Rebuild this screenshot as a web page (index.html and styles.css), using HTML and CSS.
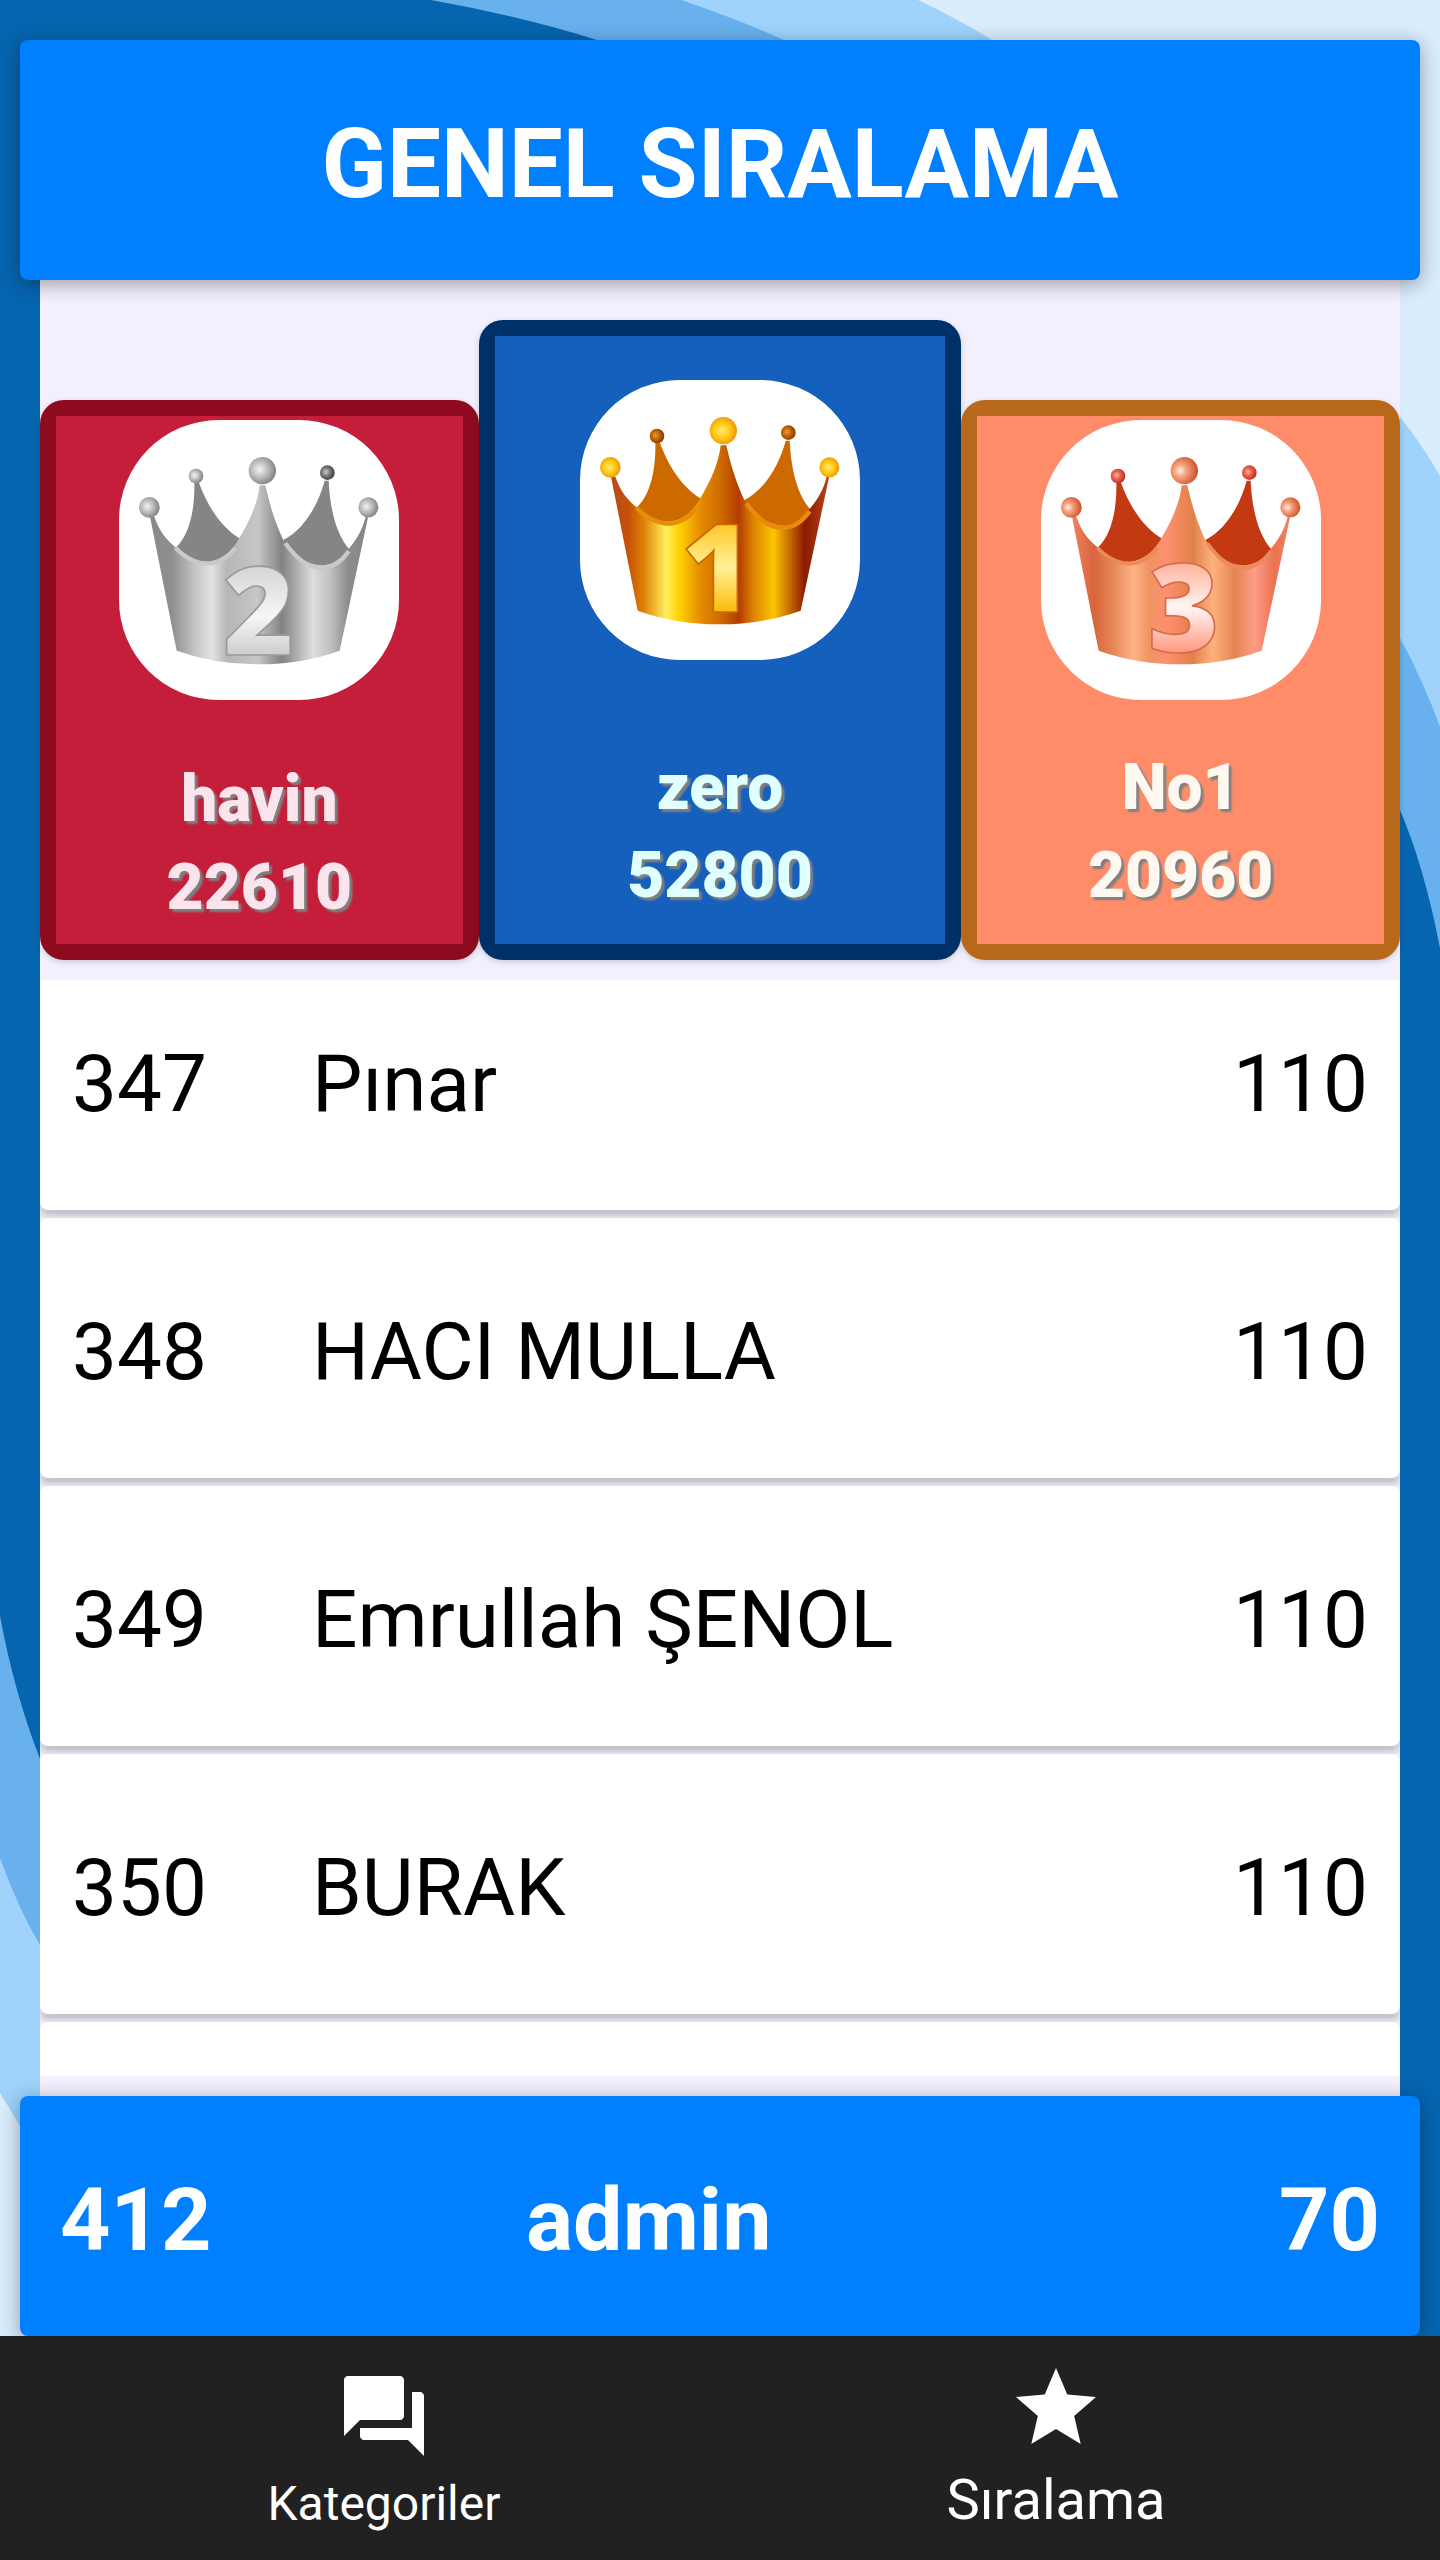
FILE: index.html
```html
<!DOCTYPE html>
<html lang="tr">
<head>
<meta charset="utf-8">
<meta name="viewport" content="width=device-width, initial-scale=1">
<title>Genel Sıralama</title>
<link rel="stylesheet" href="styles.css">
</head>
<body>
<svg class="backdrop" viewBox="0 0 1440 2560" preserveAspectRatio="none" aria-hidden="true">
  <rect width="1440" height="2560" fill="#0665af"/>
  <path fill="#68b1ec" d="M431 0Q520 16 597 40C980 200 1290 580 1400 810Q1424 866 1440 948V0Z"/>
  <path fill="#9fd3fb" d="M681 0Q740 20 784 40C1050 180 1280 430 1400 638Q1423 680 1440 727V0Z"/>
  <path fill="#daedfd" d="M918 0Q960 20 992 40C1160 140 1300 290 1400 417Q1422 444 1440 476V0Z"/>
  <path fill="#68b1ec" d="M0 1616Q14 1692 40 1759C110 1960 300 2240 500 2560H0Z"/>
  <path fill="#9fd3fb" d="M0 1858Q18 1908 40 1945C100 2090 200 2300 400 2560H0Z"/>
  <path fill="#daedfd" d="M0 2093L20 2126C80 2220 160 2400 280 2560H0Z"/>
</svg>

<svg class="defs" width="0" height="0" aria-hidden="true">
  <defs>
    <linearGradient id="silver" gradientUnits="userSpaceOnUse" x1="120" y1="0" x2="780" y2="0">
      <stop offset="0" stop-color="#8a8a8a"/><stop offset=".1" stop-color="#8e8e8e"/><stop offset=".2" stop-color="#c2c2c2"/><stop offset=".28" stop-color="#e3e3e3"/><stop offset=".35" stop-color="#b6b6b8"/><stop offset=".49" stop-color="#c6c6c6"/><stop offset=".6" stop-color="#828282"/><stop offset=".74" stop-color="#dedede"/><stop offset=".82" stop-color="#c0c0c0"/><stop offset=".9" stop-color="#8c8c8c"/><stop offset="1" stop-color="#858585"/>
    </linearGradient>
    <linearGradient id="gold" gradientUnits="userSpaceOnUse" x1="120" y1="0" x2="780" y2="0">
      <stop offset="0" stop-color="#b9481c"/><stop offset=".08" stop-color="#c65308"/><stop offset=".15" stop-color="#df8206"/><stop offset=".25" stop-color="#fff060"/><stop offset=".31" stop-color="#ffd200"/><stop offset=".41" stop-color="#e48a00"/><stop offset=".5" stop-color="#cf6a00"/><stop offset=".58" stop-color="#b33c00"/><stop offset=".65" stop-color="#de8600"/><stop offset=".74" stop-color="#fcc600"/><stop offset=".8" stop-color="#d07a00"/><stop offset=".88" stop-color="#8c1a00"/><stop offset="1" stop-color="#b9481c"/>
    </linearGradient>
    <linearGradient id="bronze" gradientUnits="userSpaceOnUse" x1="120" y1="0" x2="780" y2="0">
      <stop offset="0" stop-color="#f08060"/><stop offset=".1" stop-color="#d8653c"/><stop offset=".18" stop-color="#e58455"/><stop offset=".28" stop-color="#ffb486"/><stop offset=".35" stop-color="#ee9462"/><stop offset=".43" stop-color="#ff8f70"/><stop offset=".55" stop-color="#e08049"/><stop offset=".64" stop-color="#ffb27e"/><stop offset=".74" stop-color="#e48550"/><stop offset=".83" stop-color="#ff9c86"/><stop offset=".92" stop-color="#ea7350"/><stop offset="1" stop-color="#f08062"/>
    </linearGradient>
    <linearGradient id="silver-digit" x1="0" y1="0" x2="0" y2="1"><stop offset=".2" stop-color="#cfcfcf"/><stop offset=".55" stop-color="#f6f6f6"/><stop offset=".8" stop-color="#cacaca"/></linearGradient>
    <linearGradient id="gold-digit" x1="0" y1="0" x2="0" y2="1"><stop offset=".2" stop-color="#ffbf10"/><stop offset=".52" stop-color="#fff196"/><stop offset=".8" stop-color="#fbb800"/></linearGradient>
    <linearGradient id="bronze-digit" x1="0" y1="0" x2="0" y2="1"><stop offset=".2" stop-color="#ffa58c"/><stop offset=".52" stop-color="#fff6f3"/><stop offset=".8" stop-color="#ff9478"/></linearGradient>
    <radialGradient id="silver-ball" cx=".4" cy=".45" r=".6"><stop offset="0" stop-color="#f4f4f4"/><stop offset=".5" stop-color="#bcbcbc"/><stop offset="1" stop-color="#808080"/></radialGradient>
    <radialGradient id="silver-dark" cx=".4" cy=".45" r=".6"><stop offset="0" stop-color="#cccccc"/><stop offset=".5" stop-color="#777777"/><stop offset="1" stop-color="#3c3c3c"/></radialGradient>
    <radialGradient id="gold-ball" cx=".45" cy=".5" r=".6"><stop offset="0" stop-color="#ffec70"/><stop offset=".5" stop-color="#ffc814"/><stop offset="1" stop-color="#e88a00"/></radialGradient>
    <radialGradient id="gold-dark" cx=".4" cy=".45" r=".6"><stop offset="0" stop-color="#ee9a40"/><stop offset=".5" stop-color="#bf6200"/><stop offset="1" stop-color="#8a3a00"/></radialGradient>
    <radialGradient id="bronze-ball" cx=".35" cy=".5" r=".65"><stop offset="0" stop-color="#fff0e4"/><stop offset=".35" stop-color="#f6a37c"/><stop offset="1" stop-color="#cc4c28"/></radialGradient>
    <radialGradient id="bronze-dark" cx=".4" cy=".45" r=".6"><stop offset="0" stop-color="#ffc0b0"/><stop offset=".4" stop-color="#ee6650"/><stop offset="1" stop-color="#b8301c"/></radialGradient>
    <path id="crown-back" d="M253 246C255 330 238 405 198 442L230 520H370L392 417C345 390 298 335 266 246ZM644 242C626 310 584 388 520 420L550 530H690L718 448C680 405 660 330 656 242Z"/>
    <path id="crown-front" d="M120 350L133 350C148 392 168 420 200 444C232 474 262 486 295 485C338 481 366 452 388 415C420 360 443 310 449 256L466 256C478 310 495 368 520 420C552 464 590 496 636 496C676 494 700 472 720 442C744 412 758 386 767 350L774 352L689 752Q575 793 445 793Q315 793 200 752Z"/>
    <path id="crown-rim" d="M196 443C228 476 262 491 297 491C330 489 356 470 376 444M526 430C560 476 592 504 636 504C672 502 698 480 716 454"/>
    <g id="crown-tips-large"><circle cx="118" cy="322" r="31"/><circle cx="457" cy="212" r="41"/><circle cx="775" cy="322" r="30"/></g>
    <circle id="tip-left" cx="258" cy="228" r="22"/>
    <circle id="tip-right" cx="652" cy="218" r="22"/>
  </defs>
</svg>

<div class="app">
  <header class="title-bar"><h1 class="title">GENEL SIRALAMA</h1></header>

  <main class="board">
    <section class="podium" aria-label="İlk üç">
      <article class="place place-second">
        <div class="place-body">
          <svg class="medal" viewBox="27 60 840 840" role="img" aria-label="2">
            <use href="#crown-back" fill="#858585"/>
            <use href="#crown-front" fill="url(#silver)"/>
            <use href="#crown-rim" fill="none" stroke="#c9c9c9" stroke-width="13"/>
            <use href="#crown-tips-large" fill="url(#silver-ball)"/>
            <use href="#tip-left" fill="url(#silver-ball)"/>
            <use href="#tip-right" fill="url(#silver-dark)"/>
            <text class="digit" x="447" y="766" fill="url(#silver-digit)" stroke="#9a9a9c">2</text>
          </svg>
          <div class="player"><h2 class="player-name">havin</h2><p class="player-score">22610</p></div>
        </div>
      </article>
      <article class="place place-first">
        <div class="place-body">
          <svg class="medal" viewBox="27 60 840 840" role="img" aria-label="1">
            <use href="#crown-back" fill="#cc6a00"/>
            <use href="#crown-front" fill="url(#gold)"/>
            <use href="#crown-rim" fill="none" stroke="#e88c0c" stroke-width="13"/>
            <use href="#crown-tips-large" fill="url(#gold-ball)"/>
            <use href="#tip-left" fill="url(#gold-dark)"/>
            <use href="#tip-right" fill="url(#gold-dark)"/>
            <text class="digit" x="438" y="756" fill="url(#gold-digit)" stroke="#c86a00">1</text>
          </svg>
          <div class="player"><h2 class="player-name">zero</h2><p class="player-score">52800</p></div>
        </div>
      </article>
      <article class="place place-third">
        <div class="place-body">
          <svg class="medal" viewBox="27 60 840 840" role="img" aria-label="3">
            <use href="#crown-back" fill="#c33a12"/>
            <use href="#crown-front" fill="url(#bronze)"/>
            <use href="#crown-rim" fill="none" stroke="#ea8a5e" stroke-width="11"/>
            <use href="#crown-tips-large" fill="url(#bronze-ball)"/>
            <use href="#tip-left" fill="url(#bronze-dark)"/>
            <use href="#tip-right" fill="url(#bronze-dark)"/>
            <text class="digit" x="455" y="756" fill="url(#bronze-digit)" stroke="#d8694c">3</text>
          </svg>
          <div class="player"><h2 class="player-name">No1</h2><p class="player-score">20960</p></div>
        </div>
      </article>
    </section>

    <div class="list">
      <table class="ranking" aria-label="Sıralama listesi">
        <tbody class="ranking-body">
          <tr class="row"><td class="rank">347</td><td class="name">Pınar</td><td class="score">110</td></tr>
          <tr class="row"><td class="rank">348</td><td class="name">HACI MULLA</td><td class="score">110</td></tr>
          <tr class="row"><td class="rank">349</td><td class="name">Emrullah ŞENOL</td><td class="score">110</td></tr>
          <tr class="row"><td class="rank">350</td><td class="name">BURAK</td><td class="score">110</td></tr>
          <tr class="row"><td class="rank"></td><td class="name"></td><td class="score"></td></tr>
        </tbody>
      </table>
    </div>
  </main>

  <section class="me" aria-label="Sıralamanız">
    <span>412</span><span>admin</span><span>70</span>
  </section>

  <nav class="tabs">
    <a class="tab" href="#kategoriler">
      <svg class="tab-icon" viewBox="0 0 24 24" aria-hidden="true"><path d="M21 6h-2v9H6v2c0 .55.45 1 1 1h11l4 4V7c0-.55-.45-1-1-1zm-4 6V3c0-.55-.45-1-1-1H3c-.55 0-1 .45-1 1v14l4-4h10c.55 0 1-.45 1-1z"/></svg>
      <span class="tab-label">Kategoriler</span>
    </a>
    <a class="tab tab-active" href="#siralama" aria-current="page">
      <svg class="tab-icon" viewBox="0 0 24 24" aria-hidden="true"><path d="M12 17.27L18.18 21l-1.64-7.03L22 9.24l-7.19-.61L12 2 9.19 8.63 2 9.24l5.46 4.73L5.82 21z"/></svg>
      <span class="tab-label">Sıralama</span>
    </a>
  </nav>
</div>
</body>
</html>
```
FILE: styles.css
```css
* {
  box-sizing: border-box;
}

body {
  margin: 0;
  font-family: Roboto, "Liberation Sans", sans-serif;
  color: #000;
}

h1, h2, p {
  margin: 0;
}

.backdrop {
  position: absolute;
  inset: 0;
  z-index: -1;
  width: 100%;
  height: 100%;
}

.defs {
  position: absolute;
}

.app {
  display: flex;
  flex-direction: column;
  height: 100vh;
}

.title-bar,
.me {
  position: relative;
  flex: none;
  min-height: 240px;
  border-radius: 8px;
  background: #007fff;
  color: #fff;
  font-weight: 700;
  box-shadow: 0 4px 20px rgba(0, 0, 0, 0.36);
}

.title-bar {
  display: flex;
  align-items: center;
  justify-content: center;
  margin: 40px 20px 0;
  padding: 8px 0 0;
}

.title {
  font-size: 96px;
  line-height: 112px;
}

.board {
  display: flex;
  flex: 1;
  flex-direction: column;
  gap: 20px;
  min-height: 0;
  margin: 0 40px;
  padding: 40px 0 20px;
  background: #f3effc;
}

.podium {
  display: grid;
  grid-template-columns: 10fr 11fr 10fr;
  align-items: end;
}

.place {
  display: flex;
  height: 560px;
  padding: 16px;
  border-radius: 24px;
  box-shadow: 0 2px 6px rgba(0, 0, 0, 0.16);
}

.place-first {
  height: 640px;
  background: #003068;
}

.place-second {
  background: #8e0a1e;
}

.place-third {
  background: #b8681a;
}

.place-body {
  display: flex;
  flex: 1;
  flex-direction: column;
  align-items: center;
  justify-content: space-between;
  padding: 4px 0 24px;
}

.place-first .place-body {
  padding-top: 44px;
  background: #155fbd;
  color: #e0ffff;
}

.place-second .place-body {
  padding-bottom: 12px;
  background: #c41e3a;
  color: #fce4ec;
}

.place-third .place-body {
  background: #ff8c69;
  color: #fff8f0;
}

.medal {
  width: 280px;
  height: 280px;
  border-radius: 100px;
  background: #fff;
}

.digit {
  font-family: "Open Sans", "Noto Sans", sans-serif;
  font-size: 368px;
  font-weight: 800;
  text-anchor: middle;
  stroke-width: 5px;
}

.player {
  text-align: center;
  text-shadow: 3px 3px 2px #808080;
}

.player-name,
.player-score {
  font-size: 64px;
  font-weight: 900;
  line-height: 88px;
}

.list {
  flex: 1;
  min-height: 0;
  overflow: hidden;
}

.ranking {
  display: block;
  margin-top: -30px;
}

.ranking-body {
  display: flex;
  flex-direction: column;
  gap: 8px;
}

.row {
  display: grid;
  grid-template-columns: 240px 1fr auto;
  align-items: center;
  height: 260px;
  padding: 8px 32px 0;
  border-radius: 8px;
  background: #fff;
  box-shadow: 0 6px 6px rgba(0, 0, 0, 0.2);
  font-size: 80px;
  line-height: 96px;
}

.row td {
  padding: 0;
}

.me {
  display: grid;
  grid-template-columns: 35% 1fr auto;
  column-gap: 4px;
  align-items: center;
  margin: 0 20px;
  padding: 8px 40px 0;
  font-size: 88px;
  line-height: 104px;
}

.tabs {
  position: relative;
  display: flex;
  flex: none;
  justify-content: center;
  min-height: 224px;
  background: #212121;
}

.tab {
  display: flex;
  flex: 0 1 672px;
  flex-direction: column;
  align-items: center;
  justify-content: space-between;
  padding: 32px 0 28px;
  color: #fff;
  font-size: 48px;
  line-height: 56px;
  text-decoration: none;
}

.tab-active {
  padding-top: 24px;
  font-size: 56px;
  line-height: 64px;
}

.tab-icon {
  width: 96px;
  height: 96px;
  fill: currentColor;
}
```
